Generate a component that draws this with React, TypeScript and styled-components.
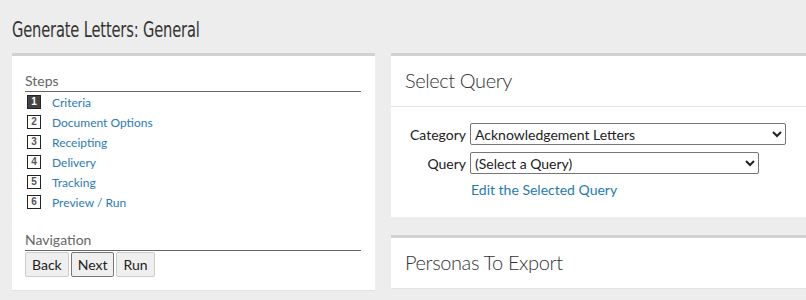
import styled, { createGlobalStyle } from 'styled-components';

const GlobalStyle = createGlobalStyle`
	body {
		margin: 0;
		background: #ededed;
		font-family: Lato, 'Open Sans', sans-serif;
		color: #333;
	}
`;

const steps = [
	'Criteria',
	'Document Options',
	'Receipting',
	'Delivery',
	'Tracking',
	'Preview / Run',
];

export default function App() {
	return (
		<>
			<GlobalStyle />
			<Page>
				<Title>Generate Letters: General</Title>
				<Columns>
					<SidePanel>
						<SectionLabel>Steps</SectionLabel>
						<StepList>
							{steps.map((step, i) => (
								<StepRow key={step}>
									<StepNumber $active={i === 0}>{i + 1}</StepNumber>
									<StepLink href="#">{step}</StepLink>
								</StepRow>
							))}
						</StepList>
						<NavLabel>Navigation</NavLabel>
						<ButtonRow>
							<NavButton>Back</NavButton>
							<NavButton $focused>Next</NavButton>
							<NavButton>Run</NavButton>
						</ButtonRow>
					</SidePanel>
					<MainColumn>
						<Card>
							<CardHeader>Select Query</CardHeader>
							<CardBody>
								<FormGrid>
									<FieldLabel>Category</FieldLabel>
									<Select $width={316} defaultValue="ack">
										<option value="ack">Acknowledgement Letters</option>
									</Select>
									<FieldLabel>Query</FieldLabel>
									<Select $width={289} defaultValue="none">
										<option value="none">(Select a Query)</option>
									</Select>
									<span />
									<EditLink href="#">Edit the Selected Query</EditLink>
								</FormGrid>
							</CardBody>
						</Card>
						<Card>
							<CardHeader>Personas To Export</CardHeader>
						</Card>
					</MainColumn>
				</Columns>
			</Page>
		</>
	);
}

const Page = styled.div`
	padding: 17px 0 0 12px;
	height: 300px;
	box-sizing: border-box;
	overflow: hidden;
`;

const Title = styled.h1`
	display: block;
	margin: 0 0 10px;
	font-family: 'DejaVu Sans Condensed', 'DejaVu Sans', sans-serif;
	font-stretch: condensed;
	font-weight: 400;
	font-size: 22px;
	line-height: 26px;
	letter-spacing: -0.2px;
	color: #333;
	white-space: nowrap;
	transform: scaleX(0.74);
	transform-origin: left center;
`;

const Columns = styled.div`
	display: flex;
	gap: 16px;
	align-items: flex-start;
`;

const SidePanel = styled.div`
	width: 363px;
	box-sizing: border-box;
	background: #fff;
	border-top: 3px solid #d0d0d5;
	padding: 16px 14px 13px 13px;
	box-shadow: 0 1px 0 #e2e2e2;
`;

const SectionLabel = styled.div`
	font-size: 14px;
	line-height: 18px;
	color: #666;
	border-bottom: 1px solid #666;
	padding-bottom: 1px;
`;

const NavLabel = styled(SectionLabel)`
	margin-top: 19px;
`;

const StepList = styled.div`
	display: flex;
	flex-direction: column;
`;

const StepRow = styled.div`
	display: flex;
	align-items: center;
	height: 20px;
	padding-left: 2px;
`;

const StepNumber = styled.span<{ $active?: boolean }>`
	width: 12px;
	height: 12px;
	border: 1px solid #222;
	background: ${(p) => (p.$active ? '#444' : '#fff')};
	color: ${(p) => (p.$active ? '#fff' : '#555')};
	font-family: 'Liberation Sans', sans-serif;
	font-weight: 700;
	font-size: 10px;
	line-height: 12px;
	text-align: center;
	margin-right: 11px;
`;

const StepLink = styled.a`
	font-size: 12px;
	color: #2b7bb5;
	text-decoration: none;
`;

const ButtonRow = styled.div`
	display: flex;
	gap: 2px;
	padding-top: 1px;
`;

const NavButton = styled.button<{ $focused?: boolean }>`
	font-family: Lato, sans-serif;
	font-size: 14px;
	color: #222;
	background: #efefef;
	border: 1px solid ${(p) => (p.$focused ? '#777' : '#ccc')};
	border-radius: 2px;
	height: 25px;
	padding: 0 6px;
`;

const MainColumn = styled.div`
	flex: 1;
	display: flex;
	flex-direction: column;
	gap: 18px;
`;

const Card = styled.div`
	background: #fff;
	border-top: 3px solid #d0d0d5;
`;

const CardHeader = styled.h2`
	margin: 0;
	padding: 0 14px;
	height: 50px;
	line-height: 48px;
	font-size: 20px;
	font-weight: 300;
	letter-spacing: -0.4px;
	color: #333;
	border-bottom: 1px solid #e4e4e4;
`;

const CardBody = styled.div`
	padding: 16px 0 19px 18px;
`;

const FormGrid = styled.div`
	display: grid;
	grid-template-columns: 57px max-content;
	column-gap: 4px;
	row-gap: 7px;
	align-items: center;
`;

const FieldLabel = styled.label`
	font-size: 14px;
	text-align: right;
	color: #222;
	white-space: nowrap;
`;

const Select = styled.select<{ $width: number }>`
	width: ${(p) => p.$width}px;
	height: 22px;
	font-family: Lato, sans-serif;
	font-size: 14px;
	color: #222;
	border: 1px solid #767676;
	border-radius: 2px;
	background: #fff;
	padding: 0;
`;

const EditLink = styled.a`
	font-size: 14px;
	color: #1f7ab0;
	text-decoration: none;
	padding-left: 1px;
`;
